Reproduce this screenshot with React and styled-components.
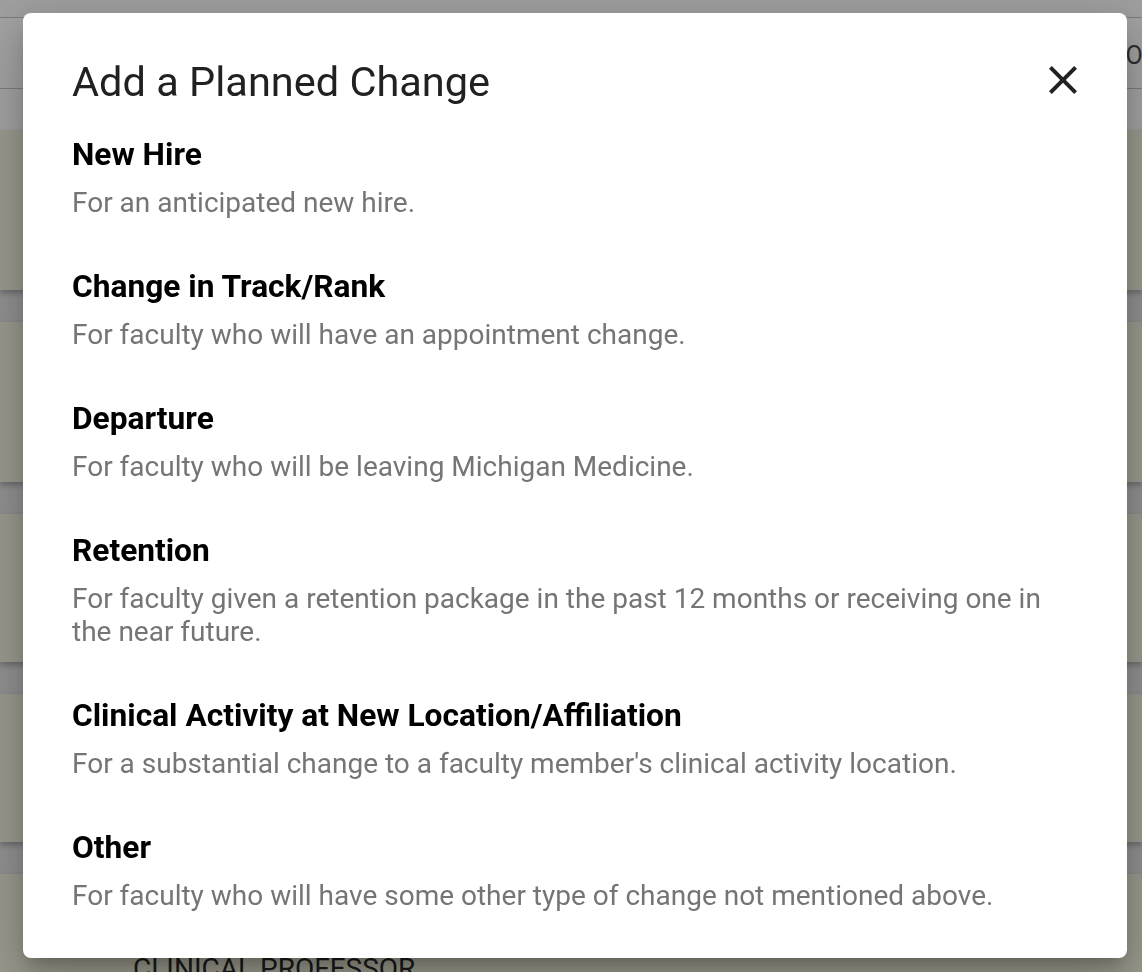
import React from "react";
import styled, { createGlobalStyle } from "styled-components";

const GlobalStyle = createGlobalStyle`
  html, body {
    margin: 0;
    padding: 0;
    height: 100%;
    overflow: hidden;
  }
  body {
    font-family: Roboto, "Noto Sans", Arial, sans-serif;
    background: #ffffff;
  }
`;

const Page = styled.div`
  width: 100%;
  height: 972px;
  overflow: hidden;
  background: #ffffff;
`;

const TopBar = styled.header`
  height: 130px;
  display: flex;
  flex-direction: column;
`;

const TopStrip = styled.div`
  height: 17px;
  background: #fbfbfb;
  border-bottom: 1px solid #c4c4c4;
`;

const TopNav = styled.div`
  height: 70px;
  display: flex;
  align-items: center;
  justify-content: flex-end;
  border-bottom: 1px solid #c4c4c4;
  font-size: 25px;
  color: #4a4a4a;
  white-space: nowrap;
  overflow: hidden;
`;

const NavLink = styled.span`
  margin-right: -70px;
  margin-top: 4px;
`;

const CardList = styled.div`
  display: flex;
  flex-direction: column;
  gap: 32px;
  background: #e4e4e4;
  padding-bottom: 40px;
`;

const Card = styled.div`
  height: ${(p) => p.$height}px;
  background: #f3f1dd;
  box-shadow: 0 3px 6px rgba(0, 0, 0, 0.28);
  padding-left: 133px;
  box-sizing: border-box;
  padding-top: ${(p) => p.$textTop || 0}px;
`;

const CardLabel = styled.div`
  font-size: 28px;
  line-height: 30px;
  color: #2a2a2a;
  text-transform: uppercase;
`;

const Backdrop = styled.div`
  position: fixed;
  inset: 0;
  background: rgba(0, 0, 0, 0.37);
`;

const Dialog = styled.section`
  position: fixed;
  left: 23px;
  top: 13px;
  width: 1104px;
  height: 945px;
  box-sizing: border-box;
  background: #ffffff;
  border-radius: 8px;
  padding: 45px 40px 0 49px;
  box-shadow: 0 11px 15px -7px rgba(0, 0, 0, 0.2),
    0 24px 38px 3px rgba(0, 0, 0, 0.14), 0 9px 46px 8px rgba(0, 0, 0, 0.12);
`;

const DialogHeader = styled.div`
  display: flex;
  align-items: center;
  justify-content: space-between;
  margin-bottom: 29px;
`;

const Title = styled.h2`
  margin: 0;
  font-size: 41.5px;
  line-height: 48px;
  font-weight: 400;
  color: #212121;
`;

const CloseButton = styled.button`
  width: 48px;
  height: 48px;
  padding: 0;
  margin-top: -4px;
  border: none;
  background: transparent;
  color: #212121;
  display: flex;
  align-items: center;
  justify-content: center;
  cursor: pointer;
`;

const OptionList = styled.div`
  display: flex;
  flex-direction: column;
  gap: 48px;
  padding-right: 24px;
`;

const Option = styled.div`
  display: flex;
  flex-direction: column;
  gap: 11px;
  cursor: pointer;
`;

const OptionTitle = styled.h3`
  margin: 0;
  font-size: 31.7px;
  line-height: 40px;
  font-weight: 700;
  color: #000000;
`;

const OptionText = styled.p`
  margin: 0;
  font-size: 28px;
  line-height: 33px;
  color: #757575;
`;

const options = [
  { title: "New Hire", text: "For an anticipated new hire." },
  {
    title: "Change in Track/Rank",
    text: "For faculty who will have an appointment change.",
  },
  {
    title: "Departure",
    text: "For faculty who will be leaving Michigan Medicine.",
  },
  {
    title: "Retention",
    text: "For faculty given a retention package in the past 12 months or receiving one in the near future.",
  },
  {
    title: "Clinical Activity at New Location/Affiliation",
    text: "For a substantial change to a faculty member's clinical activity location.",
  },
  {
    title: "Other",
    text: "For faculty who will have some other type of change not mentioned above.",
  },
];

const CloseIcon = () => (
  <svg width="48" height="48" viewBox="0 0 24 24" fill="currentColor">
    <path d="M19 6.41L17.59 5 12 10.59 6.41 5 5 6.41 10.59 12 5 17.59 6.41 19 12 13.41 17.59 19 19 17.59 13.41 12z" />
  </svg>
);

const App = () => {
  return (
    <>
      <GlobalStyle />
      <Page>
        <TopBar>
          <TopStrip />
          <TopNav>
            <NavLink>Options</NavLink>
          </TopNav>
        </TopBar>
        <CardList>
          <Card $height={160} />
          <Card $height={160} />
          <Card $height={148} />
          <Card $height={148} />
          <Card $height={160} $textTop={80}>
            <CardLabel>Clinical Professor</CardLabel>
          </Card>
        </CardList>
      </Page>
      <Backdrop />
      <Dialog role="dialog" aria-labelledby="planned-change-title">
        <DialogHeader>
          <Title id="planned-change-title">Add a Planned Change</Title>
          <CloseButton aria-label="Close">
            <CloseIcon />
          </CloseButton>
        </DialogHeader>
        <OptionList>
          {options.map((option) => (
            <Option key={option.title}>
              <OptionTitle>{option.title}</OptionTitle>
              <OptionText>{option.text}</OptionText>
            </Option>
          ))}
        </OptionList>
      </Dialog>
    </>
  );
};

export default App;
